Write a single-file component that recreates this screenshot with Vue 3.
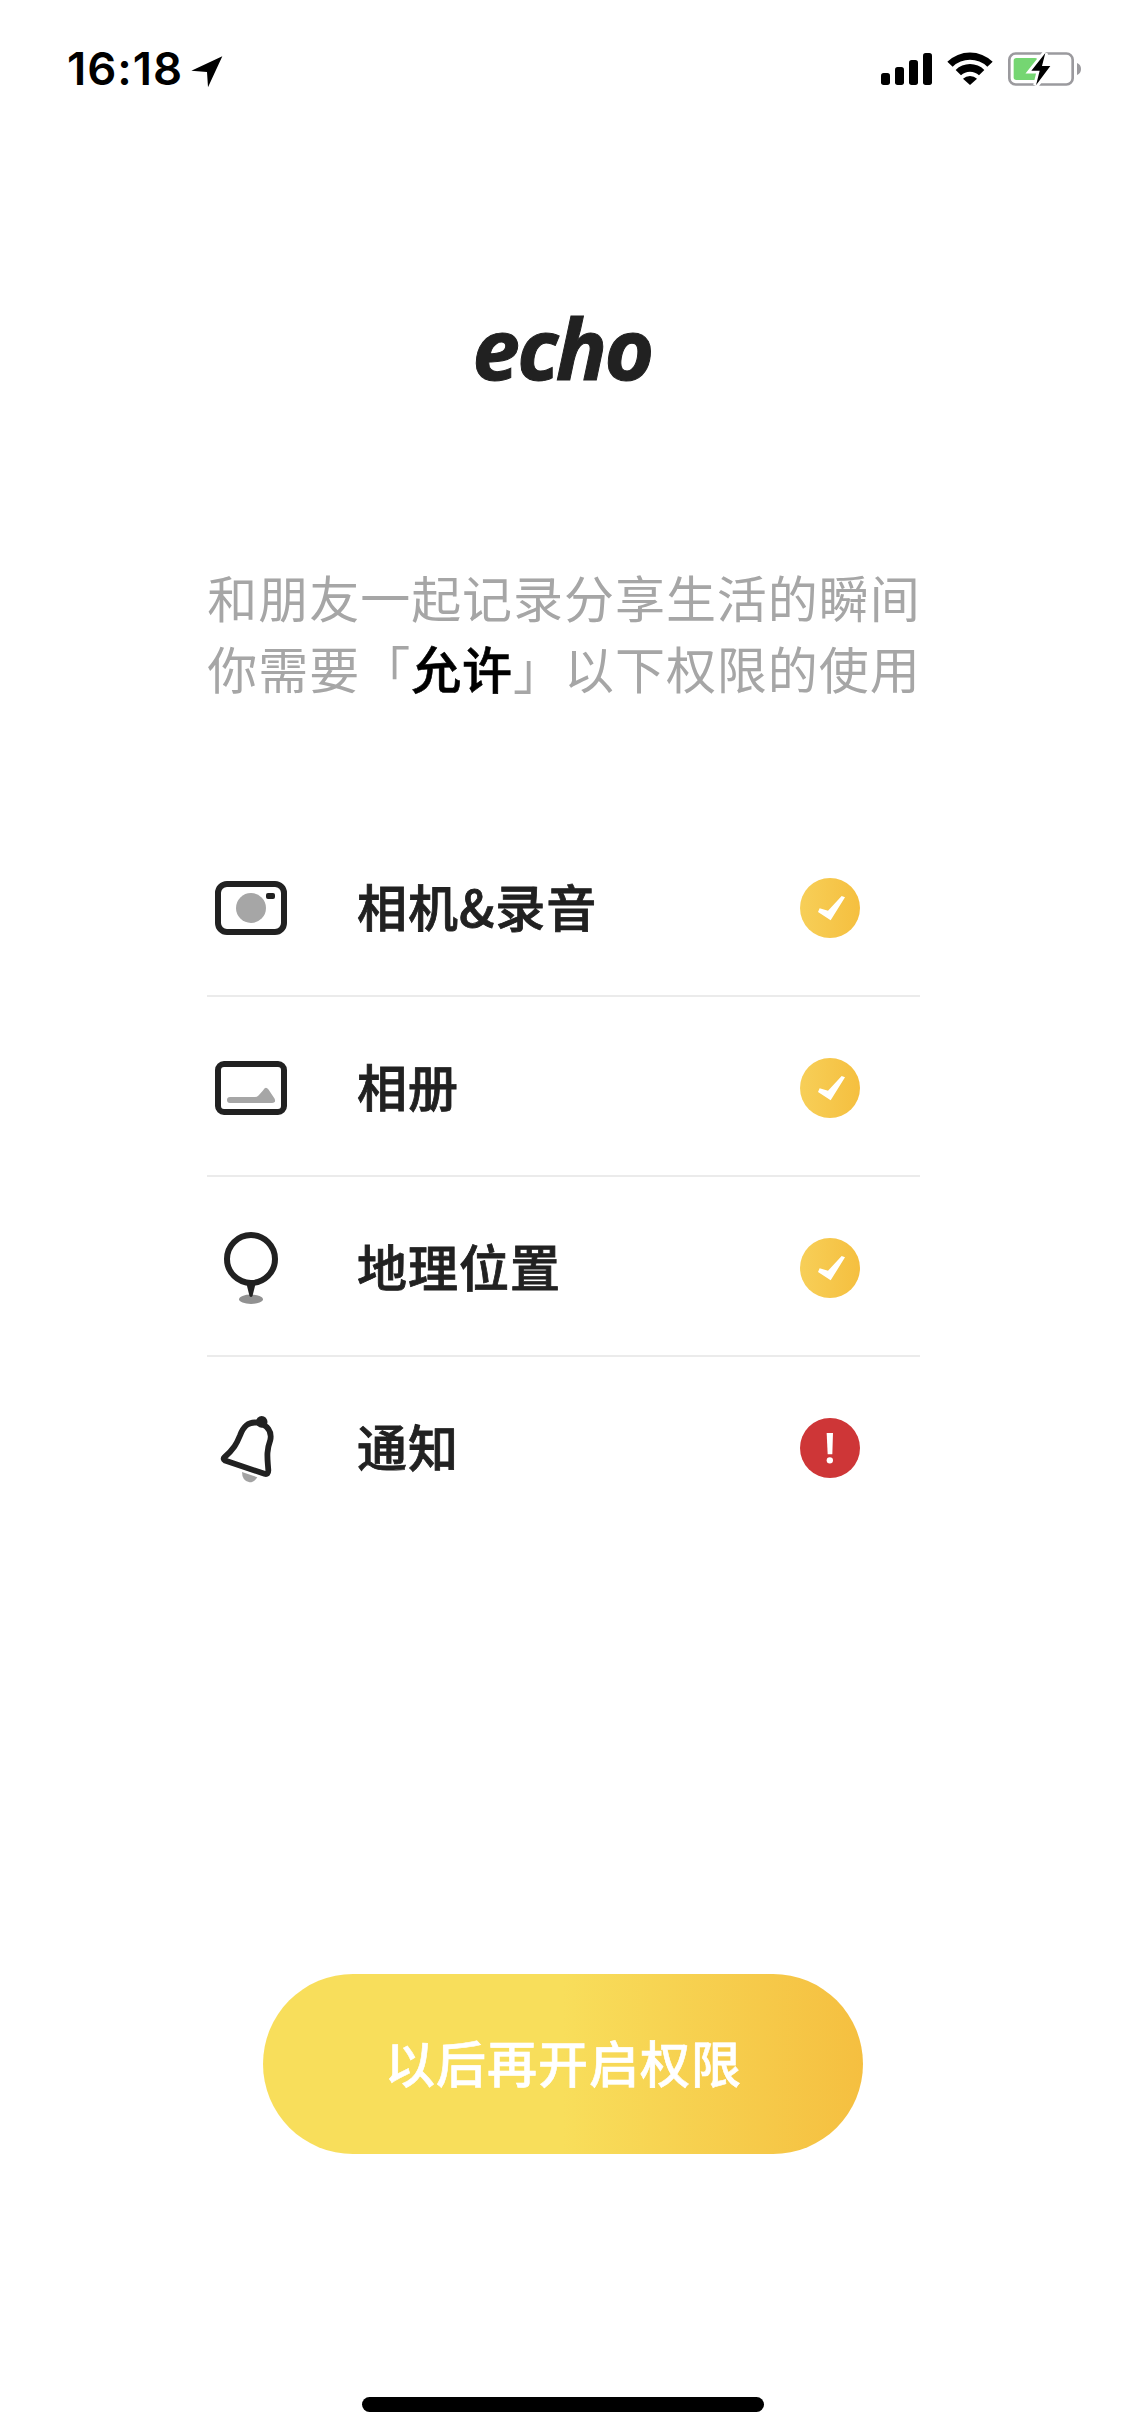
<script setup>
const permissions = [
  { id: 'camera', label: '相机&录音', granted: true },
  { id: 'album', label: '相册', granted: true },
  { id: 'location', label: '地理位置', granted: true },
  { id: 'notice', label: '通知', granted: false },
]
</script>

<template>
  <main class="screen">
    <header class="status-bar">
      <span class="time">16:18</span>
      <svg class="arrow" width="32" height="32" viewBox="424 78 96 96">
        <path d="M425 122 518 79 475 172 472 126Z" />
      </svg>
      <span class="spacer"></span>
      <svg class="signal" width="51" height="34" viewBox="63 66 153 102">
        <rect x="63" y="129" width="27" height="36" rx="8" />
        <rect x="105" y="111" width="27" height="54" rx="8" />
        <rect x="147" y="90" width="27" height="75" rx="8" />
        <rect x="189" y="69" width="27" height="96" rx="8" />
      </svg>
      <svg class="wifi" width="46" height="34" viewBox="261 66 138 102">
        <path d="M262 95A98 98 0 0 1 398 95L382 110A76 76 0 0 0 278 110Z" />
        <path d="M287 120A61 61 0 0 1 373 120L357 136A39 39 0 0 0 303 136Z" />
        <path d="M309 146A31 31 0 0 1 351 146L330 165Z" />
      </svg>
      <svg class="battery" width="75" height="35" viewBox="441 66 225 105">
        <rect x="448" y="70.500" width="190" height="93" rx="19" fill="none" stroke="#9b9a9e" stroke-width="8" />
        <path d="M651 99Q663 104 663 117T651 135Z" fill="#9b9a9e" />
        <rect x="461" y="84" width="72" height="66" rx="8" fill="#75d672" />
        <path d="M556 69 514 122H539L528 166 571 108H546Z" fill="#fff" stroke="#fff" stroke-width="17" />
        <path d="M556 69 514 122H539L528 166 571 108H546Z" />
      </svg>
    </header>

    <h1 class="logo"><span>echo</span></h1>

    <p class="intro">和朋友一起记录分享生活的瞬间<br />你需要「<b>允许</b>」以下权限的使用</p>

    <ul class="list">
      <li v-for="item in permissions" :key="item.id" class="row">
        <svg class="icon" width="72" height="72" viewBox="0 0 72 72">
          <g v-if="item.id === 'camera'">
            <rect x="3" y="12" width="66" height="48" rx="9" fill="none" stroke="#212121" stroke-width="6" />
            <circle cx="36" cy="36" r="15" fill="#a6a6a6" />
            <rect x="51" y="21" width="9" height="6" rx="2" fill="#212121" />
          </g>
          <g v-else-if="item.id === 'album'">
            <rect x="3" y="12" width="66" height="48" rx="6" fill="none" stroke="#212121" stroke-width="6" />
            <path d="M15 45H40Q42 45 43.500 43.500L48 38.500Q50.500 33.500 53.500 37.500L59.500 46.500Q61.500 51 57 51H15A3 3 0 0 1 15 45Z" fill="#a6a6a6" />
          </g>
          <g v-else-if="item.id === 'location'">
            <ellipse cx="36" cy="67.300" rx="12" ry="4.700" fill="#919191" />
            <circle cx="36" cy="27" r="24" fill="none" stroke="#212121" stroke-width="6" />
            <path d="M31.500 52H40.500L37.500 64Q36 66 34.500 64Z" fill="#212121" />
          </g>
          <g v-else>
            <path d="M27 60 42.300 65.300Q39.500 70.300 34.500 70.300 27 69 27 60Z" fill="#a3a3a3" />
            <circle cx="46.700" cy="9.900" r="5.800" fill="#212121" />
            <path d="M9.500 45.200C19 37 21.500 32 25 23.500 29 13 34.500 9.500 42.500 10.700 53 13 57 20 55.300 28 51 40 52.500 46 53.300 58Q53.500 63 49.500 61.800L10 48.500Q7.500 47 9.500 45.200Z" fill="none" stroke="#212121" stroke-width="5.800" stroke-linejoin="round" />
          </g>
        </svg>
        <span class="label">{{ item.label }}</span>
        <svg class="state" width="60" height="60" viewBox="0 0 180 180">
          <defs>
            <linearGradient :id="'gold-' + item.id">
              <stop offset="0" stop-color="#f7cf58" />
              <stop offset="1" stop-color="#f5bf3f" />
            </linearGradient>
          </defs>
          <template v-if="item.granted">
            <circle cx="90" cy="90" r="90" :fill="'url(#gold-' + item.id + ')'" />
            <path d="M59 91 84 98 125 54 135 58 92 127 54 102Z" fill="#fff" />
          </template>
          <template v-else>
            <circle cx="90" cy="90" r="90" fill="#ce3637" />
            <path d="M80 45H99L97 109H83Z" fill="#fff" />
            <circle cx="89.500" cy="127" r="9.500" fill="#fff" />
          </template>
        </svg>
      </li>
    </ul>

    <button class="later" type="button">以后再开启权限</button>
    <div class="home-indicator"></div>
  </main>
</template>

<style>
body {
  background: #fff;
}
</style>

<style scoped>
.screen {
  box-sizing: border-box;
  width: 1125px;
  height: 2436px;
  display: flex;
  flex-direction: column;
  align-items: center;
  background: #fff;
  color: #212121;
  font-family: "Noto Sans CJK SC", sans-serif;
  overflow: hidden;
}
.status-bar {
  box-sizing: border-box;
  width: 100%;
  height: 132px;
  padding: 52px 43px 0 66px;
  display: flex;
  align-items: flex-start;
  color: #000;
}
.status-bar svg {
  flex: none;
}
.time {
  width: 125px;
  font: 600 45.5px/34px Inter, sans-serif;
  letter-spacing: 1px;
  text-indent: 1px;
  white-space: nowrap;
}
.arrow {
  margin-top: 4px;
}
.spacer {
  flex: 1;
}
.wifi {
  margin-left: 15px;
}
.battery {
  margin-left: 14px;
}
.logo {
  margin: 163px 0 0;
  height: 105px;
  font: italic 700 85px/104px "Open Sans", sans-serif;
  letter-spacing: -2.6px;
  -webkit-text-stroke: 1px #212121;
}
.logo span {
  display: inline-block;
  transform: translateX(-0.5px);
}
.intro {
  margin: 161px 0 0 3px;
  font-size: 50px;
  letter-spacing: 0.95px;
  line-height: 71px;
  font-weight: 400;
  color: #a6a6a6;
  white-space: nowrap;
}
.intro b {
  font-weight: 500;
  color: #000;
  -webkit-text-stroke: 0.6px #000;
}
.list {
  list-style: none;
  margin: 114px 0 0 2px;
  padding: 0;
  width: 713px;
}
.row {
  box-sizing: border-box;
  height: 180px;
  padding: 4px 60px 0 8px;
  display: flex;
  align-items: center;
  border-bottom: 2px solid #ebebeb;
}
.row:last-child {
  border-bottom-color: transparent;
}
.label {
  flex: 1;
  margin-left: 70px;
  padding-bottom: 7px;
  font-size: 50px;
  letter-spacing: 1px;
  line-height: 72px;
  font-weight: 500;
  -webkit-text-stroke: 0.8px #212121;
}
.later {
  margin: 437px 0 0;
  width: 600px;
  height: 180px;
  padding: 0 0 7px 2px;
  border: 0;
  border-radius: 90px;
  background: linear-gradient(90deg, #f8de5b 0%, #f8de5b 50%, #f5bf40 100%);
  color: #fff;
  font: 500 50px/72px "Noto Sans CJK SC", sans-serif;
  letter-spacing: 1px;
  -webkit-text-stroke: 0.6px #fff;
}
.home-indicator {
  margin-top: 243px;
  width: 402px;
  height: 15px;
  border-radius: 8px;
  background: #000;
}
</style>
